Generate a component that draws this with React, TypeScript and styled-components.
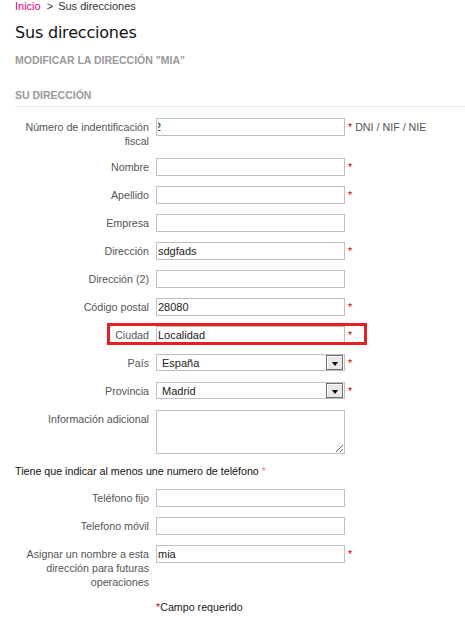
import React from "react";
import styled, { createGlobalStyle } from "styled-components";

const GlobalStyle = createGlobalStyle`
  html, body {
    margin: 0;
    padding: 0;
    background: #fff;
  }
  body {
    font-family: "Liberation Sans", Arial, sans-serif;
  }
`;

const Page = styled.div`
  padding-left: 15px;
  width: 450px;
`;

const Breadcrumb = styled.div`
  font-size: 11px;
  line-height: 13px;
  color: #333;
`;

const CrumbLink = styled.a`
  color: #e6007e;
  text-decoration: none;
`;

const CrumbSep = styled.span`
  margin: 0 5px 0 6px;
`;

const Title = styled.h1`
  margin: 10px 0 0;
  font: normal 16px/20px "DejaVu Sans", sans-serif;
  letter-spacing: -0.2px;
  color: #111;
`;

const Subtitle = styled.h2`
  margin: 11px 0 0;
  font: bold 10.5px/13px "Liberation Sans", Arial, sans-serif;
  color: #999;
`;

const SectionTitle = styled.h3`
  margin: 22px 0 0;
  padding-bottom: 4px;
  border-bottom: 1px solid #e6e6e6;
  font: bold 10.5px/13px "Liberation Sans", Arial, sans-serif;
  color: #999;
`;

const Form = styled.form`
  margin-top: 11px;
`;

const Row = styled.div`
  position: relative;
  display: flex;
  align-items: flex-start;
  min-height: 18px;
  margin-bottom: 10px;
`;

const Label = styled.label`
  flex: none;
  width: 134px;
  margin-right: 7px;
  padding-top: 2px;
  text-align: right;
  font-size: 10.7px;
  line-height: 14px;
  color: #555;
`;

const TextInput = styled.input<{ $indent?: number }>`
  box-sizing: border-box;
  width: 189px;
  height: 18px;
  margin: 0;
  padding: 0 2px 0 1px;
  border: 1px solid #bcc0c5;
  font: 11px "Liberation Sans", Arial, sans-serif;
  color: #222;
  background: #fff;
  outline: none;
  text-indent: ${(p) => p.$indent ?? 0}px;
`;

const SelectBox = styled.div`
  box-sizing: border-box;
  width: 189px;
  height: 17px;
  border: 1px solid #bcc0c5;
  display: flex;
  align-items: center;
  justify-content: space-between;
  padding-left: 5px;
  font-size: 11px;
  color: #222;
`;

const SelectButton = styled.span`
  box-sizing: border-box;
  width: 17px;
  height: 15px;
  margin-right: 1px;
  border: 1px solid #6f6f6f;
  box-shadow: inset 1px 1px 0 #fff;
  background: #e9e9e9;
  display: flex;
  align-items: center;
  justify-content: center;
`;

const Arrow = styled.span`
  width: 0;
  height: 0;
  margin-top: 3px;
  border-left: 3.5px solid transparent;
  border-right: 3.5px solid transparent;
  border-top: 4px solid #000;
`;

const TextArea = styled.textarea`
  box-sizing: border-box;
  width: 189px;
  height: 44px;
  margin: 0;
  padding: 1px;
  border: 1px solid #bcc0c5;
  outline: none;
  resize: both;
`;

const Required = styled.span`
  margin-left: 3px;
  padding-top: 2px;
  font-size: 10.7px;
  line-height: 14px;
  color: #d40000;
`;

const Hint = styled.span`
  color: #555;
`;

const PhoneNote = styled.p`
  margin: 0 0 11px;
  font-size: 10.7px;
  line-height: 14px;
  color: #111;
`;

const SoftStar = styled.span`
  color: #f08080;
`;

const Footnote = styled.p`
  margin: 11px 0 0 141px;
  font-size: 10.7px;
  line-height: 14px;
  color: #222;
`;

const Star = styled.span`
  color: #d40000;
`;

const Highlight = styled.div`
  position: absolute;
  left: 92px;
  top: -3px;
  width: 260px;
  height: 22px;
  box-sizing: border-box;
  border: 3px solid #e81e25;
  pointer-events: none;
`;

type Field = {
  label: string;
  value?: string;
  required?: boolean;
  hint?: string;
  indent?: number;
  kind?: "text" | "select" | "area";
  highlight?: boolean;
};

const addressFields: Field[] = [
  { label: "Número de indentificación fiscal", value: "2", required: true, hint: "DNI / NIF / NIE", indent: -3 },
  { label: "Nombre", required: true },
  { label: "Apellido", required: true },
  { label: "Empresa" },
  { label: "Dirección", value: "sdgfads", required: true },
  { label: "Dirección (2)" },
  { label: "Código postal", value: "28080", required: true },
  { label: "Ciudad", value: "Localidad", required: true, highlight: true },
  { label: "País", value: "España", required: true, kind: "select" },
  { label: "Provincia", value: "Madrid", required: true, kind: "select" },
  { label: "Información adicional", kind: "area" },
];

const phoneFields: Field[] = [
  { label: "Teléfono fijo" },
  { label: "Telefono móvil" },
  { label: "Asignar un nombre a esta dirección para futuras operaciones", value: "mia", required: true },
];

const FormRow = ({ field }: { field: Field }) => (
  <Row>
    <Label>{field.label}</Label>
    {field.kind === "select" ? (
      <SelectBox>
        {field.value}
        <SelectButton>
          <Arrow />
        </SelectButton>
      </SelectBox>
    ) : field.kind === "area" ? (
      <TextArea />
    ) : (
      <TextInput defaultValue={field.value ?? ""} $indent={field.indent} />
    )}
    {field.required && (
      <Required>
        *{field.hint && <Hint> {field.hint}</Hint>}
      </Required>
    )}
    {field.highlight && <Highlight />}
  </Row>
);

export default function App() {
  return (
    <>
      <GlobalStyle />
      <Page>
        <Breadcrumb>
          <CrumbLink href="#">Inicio</CrumbLink>
          <CrumbSep>&gt;</CrumbSep>
          Sus direcciones
        </Breadcrumb>
        <Title>Sus direcciones</Title>
        <Subtitle>MODIFICAR LA DIRECCIÓN "MIA"</Subtitle>
        <SectionTitle>SU DIRECCIÓN</SectionTitle>
        <Form onSubmit={(e) => e.preventDefault()}>
          {addressFields.map((f) => (
            <FormRow key={f.label} field={f} />
          ))}
          <PhoneNote>
            Tiene que indicar al menos une numero de teléfono <SoftStar>*</SoftStar>
          </PhoneNote>
          {phoneFields.map((f) => (
            <FormRow key={f.label} field={f} />
          ))}
          <Footnote>
            <Star>*</Star>Campo requerido
          </Footnote>
        </Form>
      </Page>
    </>
  );
}
